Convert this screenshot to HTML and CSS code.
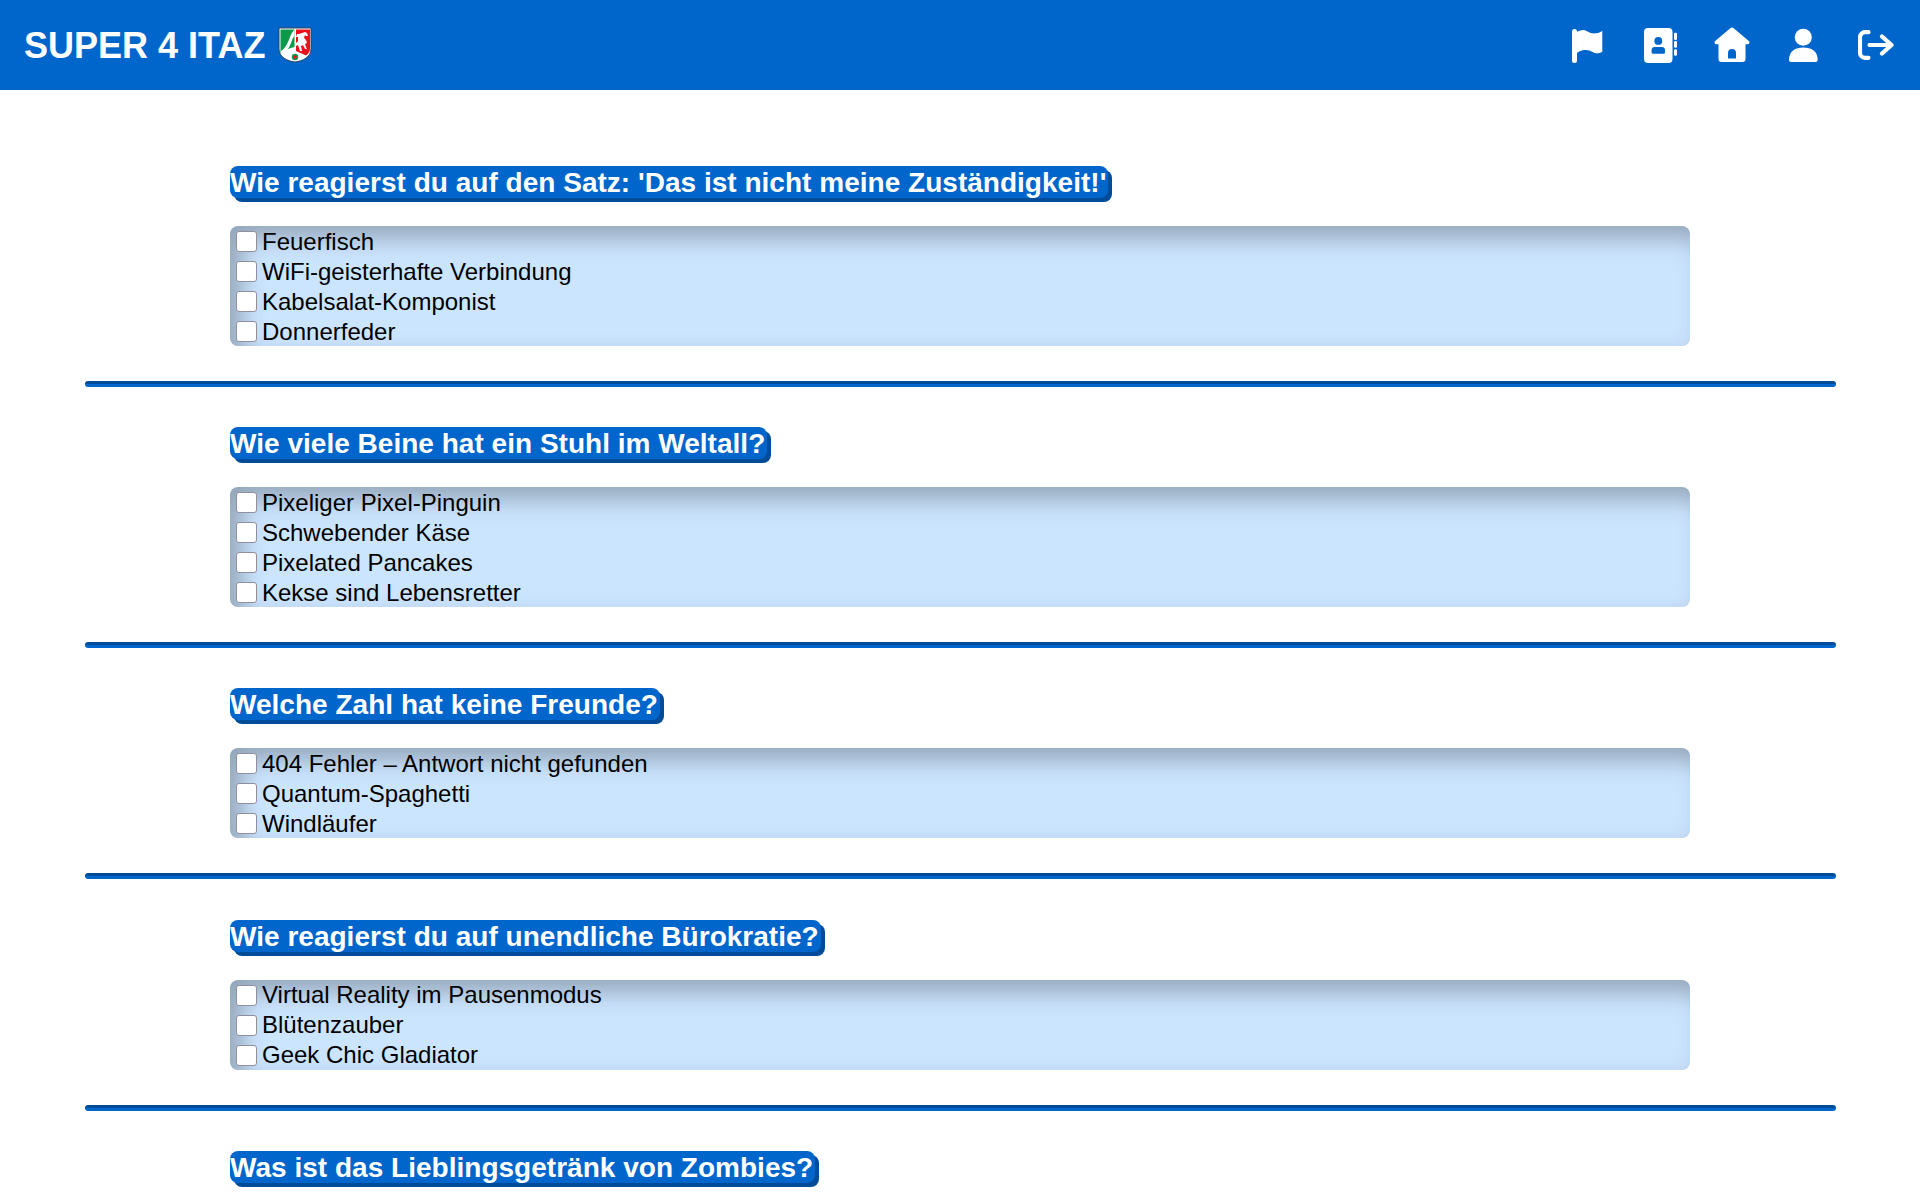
FILE: index.html
```html
<!DOCTYPE html>
<html lang="de">
<head>
  <meta charset="UTF-8">
  <meta name="viewport" content="width=device-width, initial-scale=1.0">
  <title>Super 4 ITAZ</title>
  <link rel="stylesheet" href="styles.css">
</head>
<body>

  <header class="navbar">
    <div class="brand">
      <span>SUPER 4 ITAZ</span>
      <svg class="crest" viewBox="0 0 34 36">
        <path d="M1 1h32v21c0 8-8 12-16 13C9 34 1 30 1 22z" fill="#fff" stroke="#33415c"/>
        <path d="M2.500 2.500h14V20c-5 1-10 3-14 6z" fill="#0b9a4a"/>
        <path d="M3 24c5-3 7-9 9-14 1-3 3-6 4.500-7.500V9c-3 3-3 8-6 12-2 3-5 5-7 7z" fill="#fff"/>
        <path d="M18 2.500h14V22c0 3-2 5-4 6.500L18 24z" fill="#e8121c"/>
        <path d="M24 6l3-1 2 1 1 3-2 0-1-1-1 3 2 2 1 3-2 1 1 3 1 2-2 0-2-4-2 1 1 5-2 0-2-6-2 1-1-2 3-3 0-4-2 0 1-3 2 0z" fill="#fff"/>
        <circle cx="17" cy="30" r="2.500" fill="#e8121c" stroke="#0b9a4a" stroke-width="1.500"/>
      </svg>
    </div>
    <nav class="nav-icons">
      <a href="#">
        <svg viewBox="0 0 36 36">
          <rect x="2" y="2" width="5" height="34" rx="2.500"/>
          <path d="M7 4.700C10 3.500 12 2.700 14 3c2 .3 4 2 6 2.700 2 .7 4 .9 6.300.6 2.200-.3 4.200-1.300 6-2.600v21c-2.300 1.300-4.300 1.800-6 1.600-2.300-.3-4.300-1.800-6.300-2.600-2-.7-4-1-6-.7-3 .3-5 1.700-7 2.700z"/>
        </svg>
      </a>
      <a href="#">
        <svg viewBox="0 0 36 36">
          <path fill-rule="evenodd" d="M6 1h20.500a4 4 0 0 1 4 4v27a4 4 0 0 1-4 4H6a4 4 0 0 1-4-4V5a4 4 0 0 1 4-4zM16.300 10a3.900 3.900 0 1 0 0 7.800 3.900 3.900 0 0 0 0-7.800zM12.800 20a3.200 3.200 0 0 0-3.200 3.200v2.300a1.200 1.200 0 0 0 1.200 1.200h11a1.200 1.200 0 0 0 1.200-1.200v-2.300a3.200 3.200 0 0 0-3.200-3.200z"/>
          <rect x="32" y="5.700" width="3" height="7.300" rx="1.200"/>
          <rect x="32" y="14" width="3" height="6.700" rx="1.200"/>
          <rect x="32" y="22.300" width="3" height="6.500" rx="1.200"/>
        </svg>
      </a>
      <a href="#">
        <svg viewBox="0 0 36 36">
          <path fill-rule="evenodd" d="M16 1.500a3 3 0 0 1 4 0L34.800 14a1.800 1.800 0 0 1-1.200 3.200h-2.100V32a3 3 0 0 1-3 3H7.500a3 3 0 0 1-3-3V17.200H2.400A1.800 1.800 0 0 1 1.200 14zM14 31.500h8V26a4 4 0 0 0-8 0z"/>
        </svg>
      </a>
      <a href="#">
        <svg viewBox="0 0 36 36">
          <circle cx="17.300" cy="10.300" r="8.500"/>
          <path d="M3 33c0-9 6.300-12.500 14.300-12.500S31.700 24 31.700 33a2 2 0 0 1-2 2H5a2 2 0 0 1-2-2z"/>
        </svg>
      </a>
      <a href="#">
        <svg class="outline" viewBox="0 0 36 36">
          <path d="M10.500 5.200H7a5 5 0 0 0-5 5v15.600a5 5 0 0 0 5 5h3.500M11.500 18h21M24 9.500l9.500 8.500-9.500 8.500"/>
        </svg>
      </a>
    </nav>
  </header>

  <main class="quiz">
    <section class="question">
      <h2>Wie reagierst du auf den Satz: 'Das ist nicht meine Zuständigkeit!'</h2>
      <div class="answers">
        <label><input type="checkbox"> Feuerfisch</label>
        <label><input type="checkbox"> WiFi-geisterhafte Verbindung</label>
        <label><input type="checkbox"> Kabelsalat-Komponist</label>
        <label><input type="checkbox"> Donnerfeder</label>
      </div>
    </section>
    <hr>
    <section class="question">
      <h2>Wie viele Beine hat ein Stuhl im Weltall?</h2>
      <div class="answers">
        <label><input type="checkbox"> Pixeliger Pixel-Pinguin</label>
        <label><input type="checkbox"> Schwebender Käse</label>
        <label><input type="checkbox"> Pixelated Pancakes</label>
        <label><input type="checkbox"> Kekse sind Lebensretter</label>
      </div>
    </section>
    <hr>
    <section class="question">
      <h2>Welche Zahl hat keine Freunde?</h2>
      <div class="answers">
        <label><input type="checkbox"> 404 Fehler – Antwort nicht gefunden</label>
        <label><input type="checkbox"> Quantum-Spaghetti</label>
        <label><input type="checkbox"> Windläufer</label>
      </div>
    </section>
    <hr>
    <section class="question">
      <h2>Wie reagierst du auf unendliche Bürokratie?</h2>
      <div class="answers">
        <label><input type="checkbox"> Virtual Reality im Pausenmodus</label>
        <label><input type="checkbox"> Blütenzauber</label>
        <label><input type="checkbox"> Geek Chic Gladiator</label>
      </div>
    </section>
    <hr>
    <section class="question">
      <h2>Was ist das Lieblingsgetränk von Zombies?</h2>
    </section>
  </main>

</body>
</html>
```

FILE: styles.css
```css
html, body {
  height: 1200px;
  overflow: hidden;
}

body {
  margin: 0;
  font-family: "Liberation Sans", Arial, sans-serif;
  background-color: #fff;
  color: #000;
}

.navbar {
  height: 90px;
  background-color: #0066cc;
  display: flex;
  align-items: center;
  justify-content: space-between;
  padding: 0 26px 0 24px;
}

.brand {
  display: flex;
  align-items: center;
  gap: 13px;
  color: #fff;
  font-size: 36px;
  font-weight: bold;
}

.brand span {
  padding-top: 2px;
}

.crest {
  width: 34px;
  height: 36px;
}

.nav-icons {
  display: flex;
  align-items: center;
  gap: 36px;
}

.nav-icons a {
  display: flex;
}

.nav-icons svg {
  height: 36px;
  width: 36px;
  fill: #fff;
}

.nav-icons svg.outline {
  fill: none;
  stroke: #fff;
  stroke-width: 4.2;
  stroke-linecap: round;
  stroke-linejoin: round;
}

.quiz {
  padding: 76px 84px 0 85px;
}

.question {
  padding: 0 146px 0 145px;
}

h2 {
  display: inline-block;
  margin: 0 0 28px;
  padding: 1px 2px 0 0;
  font-size: 28px;
  line-height: 31px;
  letter-spacing: 0.02px;
  color: #fff;
  background-color: #0066cc;
  border-radius: 8px;
  box-shadow: 4px 4px 0 #004c99;
}

.answers {
  display: flex;
  flex-direction: column;
  background-color: #cce5ff;
  border-radius: 8px;
  box-shadow: inset 12px 12px 24px rgba(0, 0, 0, 0.28);
}

.answers label {
  display: flex;
  align-items: center;
  gap: 5px;
  height: 30px;
  padding-top: 1px;
  box-sizing: border-box;
  font-size: 24px;
}

.answers input {
  appearance: none;
  width: 21px;
  height: 21px;
  margin: 0 0 0 6px;
  background-color: #fff;
  border: 1px solid #8f8f9d;
  border-radius: 3px;
}

hr {
  height: 6px;
  margin: 35px 0 40.2px;
  border: none;
  border-radius: 3px;
  background: linear-gradient(#004c99 50%, #0066cc 50%);
}
```
